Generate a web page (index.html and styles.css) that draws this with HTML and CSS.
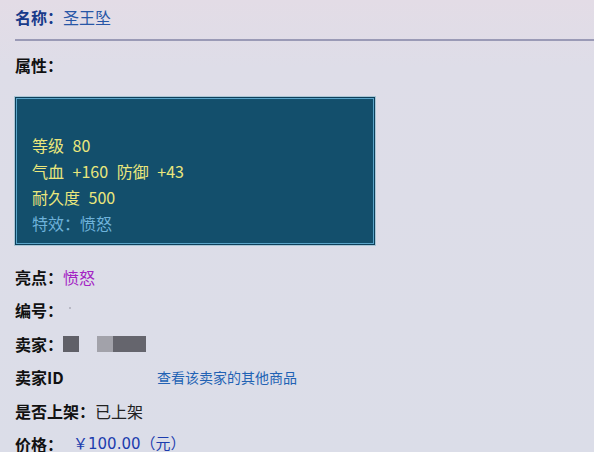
FILE: index.html
```html
<!DOCTYPE html>
<html lang="zh">
<head>
<meta charset="utf-8">
<title>圣王坠</title>
<link rel="stylesheet" href="styles.css">
</head>
<body>
<div class="page">
  <div class="name"><span class="name-label">名称：</span><span class="name-value">圣王坠</span></div>
  <div class="rule"></div>
  <div class="attr-label">属性：</div>
  <div class="box">
    <div class="stat">等级 80</div>
    <div class="stat">气血 +160 防御 +43</div>
    <div class="stat">耐久度 500</div>
    <div class="stat effect">特效：愤怒</div>
  </div>
  <div class="rows">
    <div class="row"><span class="label">亮点：</span><span class="purple">愤怒</span></div>
    <div class="row"><span class="label">编号：</span><span class="dot"></span></div>
    <div class="row"><span class="label">卖家：</span><span class="blocks"><span class="blk b1"></span><span class="blk b2"></span><span class="blk b3"></span></span></div>
    <div class="row"><span class="label id-label">卖家ID</span><a class="link" href="#">查看该卖家的其他商品</a></div>
    <div class="row"><span class="label">是否上架：</span><span class="plain">已上架</span></div>
    <div class="row"><span class="label">价格：</span><span class="price">￥100.00（元）</span></div>
  </div>
</div>
</body>
</html>
```

FILE: styles.css
```css
html, body {
  margin: 0;
  padding: 0;
}
body {
  width: 594px;
  height: 452px;
  overflow: hidden;
  background: linear-gradient(180deg, #e3dce6 0%, #dedde8 15%, #dbdde8 100%);
  font-family: "Noto Sans CJK SC", "Noto Sans", sans-serif;
  font-size: 16px;
  color: #111;
}
.page {
  padding-left: 15px;
}
.name {
  margin-top: 5px;
  height: 24px;
  line-height: 24px;
}
.name-label {
  font-weight: 700;
  color: #183a8a;
}
.name-value {
  color: #2856a6;
}
.rule {
  margin-top: 10px;
  height: 2px;
  background: #9a9ab6;
}
.attr-label {
  margin-top: 12px;
  height: 24px;
  line-height: 24px;
  font-weight: 700;
}
.box {
  margin-top: 19px;
  margin-left: -1px;
  width: 362px;
  height: 150px;
  box-sizing: border-box;
  background: #134f6c;
  border: 1px solid #a9c6d6;
  box-shadow: inset 0 0 0 1px #0e3f5a, inset 0 0 0 2px #5aa4c8;
  padding: 35px 0 0 17px;
}
.stat {
  height: 26px;
  line-height: 26px;
  font-size: 16px;
  color: #ebe77c;
  white-space: pre;
  word-spacing: 5px;
}
.stat.effect {
  color: #6eb2da;
  word-spacing: 0;
}
.rows {
  margin-top: 15px;
}
.row {
  height: 33.4px;
  line-height: 33.4px;
  display: flex;
  align-items: center;
}
.label {
  font-weight: 700;
  color: #111;
}
.purple {
  color: #a424c4;
}
.dot {
  display: inline-block;
  width: 2px;
  height: 2px;
  margin-left: 6px;
  margin-top: -6px;
  background: #b8b8c4;
}
.blocks {
  display: flex;
  align-items: center;
  margin-left: 0;
}
.blk {
  display: inline-block;
  height: 16px;
}
.b1 {
  width: 16px;
  background: #606068;
}
.b2 {
  width: 16px;
  margin-left: 18px;
  background: #a2a2aa;
}
.b3 {
  width: 33px;
  background: #65656d;
}
.id-label {
  width: 142px;
}
.link {
  color: #2262b4;
  text-decoration: none;
  font-size: 14px;
  font-weight: 400;
}
.plain {
  color: #222;
}
.price {
  margin-left: 10px;
  color: #1c3cae;
  font-family: "DejaVu Sans", "Noto Sans CJK SC", sans-serif;
  font-size: 15px;
}
```
